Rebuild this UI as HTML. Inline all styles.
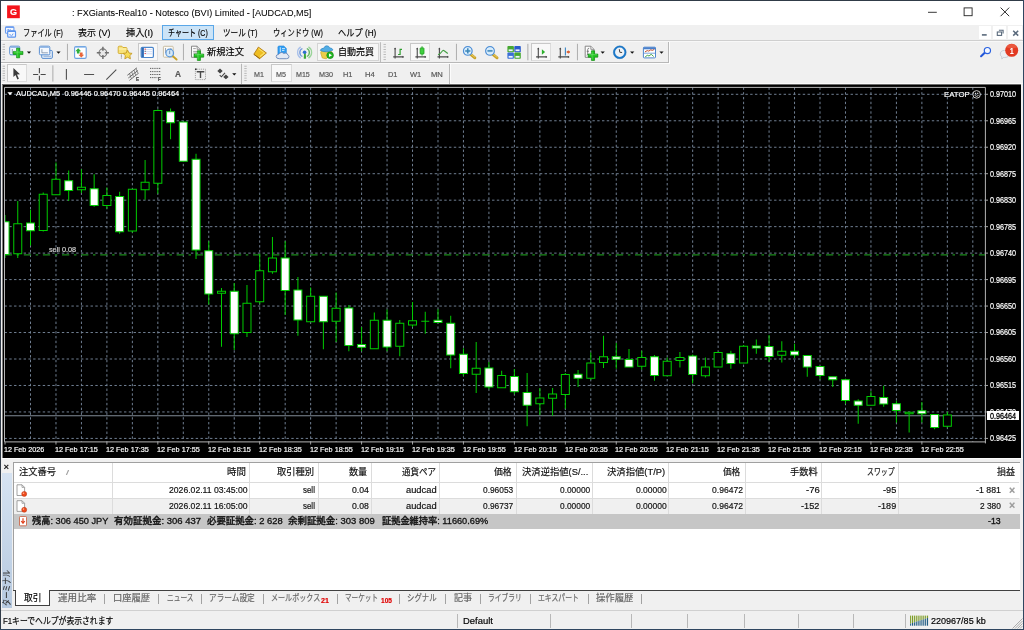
<!DOCTYPE html>
<html lang="ja"><head><meta charset="utf-8"><title>FXGiants-Real10 - Notesco (BVI) Limited - [AUDCAD,M5]</title>
<style>
html,body{margin:0;padding:0;}
body{width:1024px;height:630px;position:relative;overflow:hidden;background:#f0f0f0;font-family:"Liberation Sans","Noto Sans CJK JP",sans-serif;}
.abs{position:absolute;}
.t{position:absolute;white-space:pre;line-height:1;transform-origin:0 50%;-webkit-text-stroke:0.18px;}
.sb{-webkit-text-stroke:0.42px;}
.b{position:absolute;box-sizing:border-box;}
</style></head><body>
<div class="b" style="left:0px;top:0px;width:1024px;height:24.6px;background:#fff;"></div>
<div class="b" style="left:162.2px;top:24.7px;width:51.8px;height:15.2px;background:#cce4f7;border:1px solid #5aa7e8;"></div>
<div class="b" style="left:0px;top:40.0px;width:1024px;height:0.9px;background:#cfcfcf;"></div>
<div class="b" style="left:0px;top:40.9px;width:1024px;height:0.8px;background:#f8f8f8;"></div>
<div class="b" style="left:0px;top:62.2px;width:668.7px;height:0.9px;background:#b8b8b8;"></div>
<div class="b" style="left:668.2px;top:42px;width:0.9px;height:21px;background:#b8b8b8;"></div>
<div class="b" style="left:0px;top:63.1px;width:669.6px;height:0.9px;background:#fcfcfc;"></div>
<div class="b" style="left:669.1px;top:42px;width:0.9px;height:22px;background:#fcfcfc;"></div>
<div class="b" style="left:450.1px;top:64px;width:0.9px;height:20px;background:#fcfcfc;"></div>
<div class="b" style="left:0px;top:83.0px;width:1024px;height:0.8px;background:#fafafa;"></div>
<div class="b" style="left:449.2px;top:64px;width:0.9px;height:20px;background:#b8b8b8;"></div>
<div class="b" style="left:137.5px;top:43.3px;width:20.1px;height:17.6px;background:#f8f8f8;border:1px solid #dcdcdc;border-top-color:#c8c8c8;border-left-color:#c8c8c8;"></div>
<div class="b" style="left:410.1px;top:43.3px;width:20.1px;height:17.6px;background:#f8f8f8;border:1px solid #dcdcdc;border-top-color:#c8c8c8;border-left-color:#c8c8c8;"></div>
<div class="b" style="left:531.4px;top:43.3px;width:20px;height:17.6px;background:#f8f8f8;border:1px solid #dcdcdc;border-top-color:#c8c8c8;border-left-color:#c8c8c8;"></div>
<div class="b" style="left:317px;top:43.3px;width:62.4px;height:17.6px;background:#f6f6f6;border:1px solid #d4d4d4;"></div>
<div class="b" style="left:7.3px;top:64.3px;width:19.7px;height:17.6px;background:#f8f8f8;border:1px solid #dcdcdc;border-top-color:#c8c8c8;border-left-color:#c8c8c8;"></div>
<div class="b" style="left:271.3px;top:64.4px;width:20.3px;height:17.6px;background:#f8f8f8;border:1px solid #dcdcdc;border-top-color:#c8c8c8;border-left-color:#c8c8c8;"></div>
<div class="b" style="left:978.6px;top:25.8px;width:12.9px;height:13.5px;background:#fff;"></div>
<div class="b" style="left:993.4px;top:25.8px;width:12.9px;height:13.5px;background:#fff;"></div>
<div class="b" style="left:1008.3px;top:25.8px;width:13.3px;height:13.5px;background:#fff;"></div>
<div class="b" style="left:1.9px;top:83.6px;width:1019.6px;height:1.5px;background:#6a6a6a;"></div>
<div class="b" style="left:1.9px;top:84.8px;width:0.8px;height:373px;background:#808080;"></div>
<div class="b" style="left:2.5px;top:84.9px;width:1018.8px;height:372.8px;background:#000;"></div>
<div class="b" style="left:0px;top:457.7px;width:1024px;height:1.2px;background:#fafafa;"></div>
<div class="b" style="left:1.5px;top:473.2px;width:10.7px;height:135px;background:linear-gradient(#d6e3f2,#b6c9df);"></div>
<div class="b" style="left:13.2px;top:461.8px;width:1006.8px;height:129.0px;background:#fff;border-top:1px solid #a0a0a0;border-left:1px solid #a0a0a0;"></div>
<div class="b" style="left:14px;top:482px;width:1005.3px;height:0.9px;background:#dcdcdc;"></div>
<div class="b" style="left:14px;top:498.3px;width:1006px;height:15.6px;background:#f0f0f0;"></div>
<div class="b" style="left:14px;top:498px;width:1005.3px;height:0.9px;background:#dcdcdc;"></div>
<div class="b" style="left:14px;top:513.9px;width:1006px;height:15.4px;background:#c6c6c6;"></div>
<div class="b" style="left:111.8px;top:463.4px;width:0.9px;height:50.3px;background:#dcdcdc;"></div>
<div class="b" style="left:249.29999999999998px;top:463.4px;width:0.9px;height:50.3px;background:#dcdcdc;"></div>
<div class="b" style="left:317.6px;top:463.4px;width:0.9px;height:50.3px;background:#dcdcdc;"></div>
<div class="b" style="left:371.1px;top:463.4px;width:0.9px;height:50.3px;background:#dcdcdc;"></div>
<div class="b" style="left:439.20000000000005px;top:463.4px;width:0.9px;height:50.3px;background:#dcdcdc;"></div>
<div class="b" style="left:515.6px;top:463.4px;width:0.9px;height:50.3px;background:#dcdcdc;"></div>
<div class="b" style="left:591.9px;top:463.4px;width:0.9px;height:50.3px;background:#dcdcdc;"></div>
<div class="b" style="left:668.3000000000001px;top:463.4px;width:0.9px;height:50.3px;background:#dcdcdc;"></div>
<div class="b" style="left:745.0px;top:463.4px;width:0.9px;height:50.3px;background:#dcdcdc;"></div>
<div class="b" style="left:821.4px;top:463.4px;width:0.9px;height:50.3px;background:#dcdcdc;"></div>
<div class="b" style="left:897.7px;top:463.4px;width:0.9px;height:50.3px;background:#dcdcdc;"></div>
<div class="b" style="left:13.2px;top:590.2px;width:1006.8px;height:1.0px;background:#404040;"></div>
<div class="b" style="left:15px;top:590.2px;width:34.8px;height:15.8px;background:#fff;border:1px solid #404040;border-top:none;"></div>
<div class="b" style="left:0px;top:610.4px;width:1024px;height:0.9px;background:#d0d0d0;"></div>
<div class="b" style="left:456.8px;top:613.5px;width:0.9px;height:14.5px;background:#b8b8b8;"></div>
<div class="b" style="left:549.8000000000001px;top:613.5px;width:0.9px;height:14.5px;background:#b8b8b8;"></div>
<div class="b" style="left:631.1px;top:613.5px;width:0.9px;height:14.5px;background:#b8b8b8;"></div>
<div class="b" style="left:686.9px;top:613.5px;width:0.9px;height:14.5px;background:#b8b8b8;"></div>
<div class="b" style="left:744.0px;top:613.5px;width:0.9px;height:14.5px;background:#b8b8b8;"></div>
<div class="b" style="left:798.1px;top:613.5px;width:0.9px;height:14.5px;background:#b8b8b8;"></div>
<div class="b" style="left:852.9px;top:613.5px;width:0.9px;height:14.5px;background:#b8b8b8;"></div>
<div class="b" style="left:905.4px;top:613.5px;width:0.9px;height:14.5px;background:#b8b8b8;"></div>
<div class="b" style="left:0px;top:0px;width:1024px;height:0.9px;background:#303b48;"></div>
<div class="b" style="left:0px;top:0px;width:1.1px;height:630px;background:#303b48;"></div>
<div class="b" style="left:1022.9px;top:0px;width:1.1px;height:630px;background:#2f4660;"></div>
<div class="b" style="left:0px;top:629.0px;width:1024px;height:1.0px;background:#2f4660;"></div>
<svg class="abs" style="left:0;top:0" width="1024" height="630" viewBox="0 0 1024 630">
<path d="M4.5 94.30H985.4 M4.5 120.77H985.4 M4.5 147.24H985.4 M4.5 173.71H985.4 M4.5 200.18H985.4 M4.5 226.65H985.4 M4.5 253.12H985.4 M4.5 279.59H985.4 M4.5 306.06H985.4 M4.5 332.53H985.4 M4.5 359.00H985.4 M4.5 385.47H985.4 M4.5 411.94H985.4 M4.5 438.41H985.4" stroke="#76869a" stroke-width="0.95" stroke-dasharray="2.4 2.38" fill="none"/>
<path d="M30.50 87.4V441.9 M55.97 87.4V441.9 M81.43 87.4V441.9 M106.90 87.4V441.9 M132.37 87.4V441.9 M157.84 87.4V441.9 M183.31 87.4V441.9 M208.77 87.4V441.9 M234.24 87.4V441.9 M259.71 87.4V441.9 M285.18 87.4V441.9 M310.65 87.4V441.9 M336.11 87.4V441.9 M361.58 87.4V441.9 M387.05 87.4V441.9 M412.52 87.4V441.9 M437.99 87.4V441.9 M463.45 87.4V441.9 M488.92 87.4V441.9 M514.39 87.4V441.9 M539.86 87.4V441.9 M565.33 87.4V441.9 M590.79 87.4V441.9 M616.26 87.4V441.9 M641.73 87.4V441.9 M667.20 87.4V441.9 M692.67 87.4V441.9 M718.13 87.4V441.9 M743.60 87.4V441.9 M769.07 87.4V441.9 M794.54 87.4V441.9 M820.01 87.4V441.9 M845.47 87.4V441.9 M870.94 87.4V441.9 M896.41 87.4V441.9 M921.88 87.4V441.9 M947.35 87.4V441.9 M972.81 87.4V441.9" stroke="#76869a" stroke-width="0.95" stroke-dasharray="2.4 2.38" fill="none"/>
<path d="M4.7 254.9H985.4" stroke="#1c8c1c" stroke-width="1.1" stroke-dasharray="7.3 4.6 2.5 4.7" fill="none"/>
<path d="M4.5 415.75H985.4" stroke="#98a4b2" stroke-width="0.85" fill="none"/>
<defs><clipPath id="cc"><rect x="5" y="88" width="980" height="353.5"/></clipPath></defs>
<g clip-path="url(#cc)" stroke="#00cc00" stroke-width="1">
<path d="M5.03 215V258 M17.76 201V258 M30.50 209.75V245.5 M43.23 192.5V231.5 M55.97 162.5V194.75 M68.70 170.5V201 M81.43 169.25V193 M94.17 174.25V206.75 M106.90 187.5V208.75 M119.64 191.75V233.75 M132.37 189.25V232.5 M145.10 160V199.75 M157.84 109.25V193.75 M170.57 108.5V139.25 M183.31 122V161.25 M196.04 153.75V259 M208.77 241.25V304.5 M221.51 288V346.75 M234.24 283V350 M246.98 285V337 M259.71 253.75V303.75 M272.44 237V273.75 M285.18 241.25V315 M297.91 277V335.75 M310.65 287.5V321.75 M323.38 296.25V349.25 M336.11 292.5V342 M348.85 305V351.25 M361.58 327V351.25 M374.32 312.5V348.75 M387.05 309.5V351.25 M399.78 320V356.25 M412.52 302V327 M425.25 311.75V333.75 M437.99 309.25V322.5 M450.72 315.75V368.25 M463.45 348.25V375.75 M476.19 342V393 M488.92 362V389.25 M501.66 370.75V387.75 M514.39 369V394.25 M527.12 373V426.25 M539.86 388V415 M552.59 388V415.75 M565.33 373V408.75 M578.06 370V387 M590.79 352.5V380 M603.53 335.75V368 M616.26 343V368.75 M629.00 349V367 M641.73 350.75V369.5 M654.46 355V380.75 M667.20 357.5V375.75 M679.93 352V367.5 M692.67 354.5V383.25 M705.40 357.5V377.5 M718.13 352.5V367 M730.87 350.75V368.75 M743.60 345V363 M756.34 339.5V353.75 M769.07 335V362 M781.80 341.25V362.5 M794.54 343.75V358 M807.27 355.5V376.75 M820.01 366.5V379.5 M832.74 376.75V387 M845.47 378.75V403.75 M858.21 399.25V423.75 M870.94 391.25V405.25 M883.68 385.75V406.75 M896.41 400.75V422.5 M909.14 412.25V432.5 M921.88 402V422.5 M934.61 414.5V429.25 M947.35 411.75V427.5" fill="none"/>
<rect x="1.03" y="221.75" width="8.0" height="32.75" fill="#fff"/>
<rect x="13.76" y="223.75" width="8.0" height="30.00" fill="#000"/>
<rect x="26.50" y="223" width="8.0" height="7.75" fill="#fff"/>
<rect x="39.23" y="194.25" width="8.0" height="36.25" fill="#000"/>
<rect x="51.97" y="179.25" width="8.0" height="15.50" fill="#000"/>
<rect x="64.70" y="180.75" width="8.0" height="9.75" fill="#fff"/>
<rect x="77.43" y="187.25" width="8.0" height="2.50" fill="#000"/>
<rect x="90.17" y="188.75" width="8.0" height="16.75" fill="#fff"/>
<rect x="102.90" y="195.5" width="8.0" height="10.00" fill="#000"/>
<rect x="115.64" y="196.5" width="8.0" height="35.25" fill="#fff"/>
<rect x="128.37" y="189.25" width="8.0" height="41.75" fill="#000"/>
<rect x="141.10" y="182.25" width="8.0" height="7.50" fill="#000"/>
<rect x="153.84" y="110.5" width="8.0" height="72.75" fill="#000"/>
<rect x="166.57" y="111.75" width="8.0" height="11.00" fill="#fff"/>
<rect x="179.31" y="122" width="8.0" height="39.25" fill="#fff"/>
<rect x="192.04" y="159.25" width="8.0" height="90.75" fill="#fff"/>
<rect x="204.77" y="250.75" width="8.0" height="43.25" fill="#fff"/>
<rect x="217.51" y="291.25" width="8.0" height="2.00" fill="#000"/>
<rect x="230.24" y="291.25" width="8.0" height="42.50" fill="#fff"/>
<rect x="242.98" y="303.25" width="8.0" height="29.25" fill="#000"/>
<rect x="255.71" y="270.75" width="8.0" height="31.00" fill="#000"/>
<rect x="268.44" y="258" width="8.0" height="13.75" fill="#000"/>
<rect x="281.18" y="258" width="8.0" height="32.50" fill="#fff"/>
<rect x="293.91" y="290" width="8.0" height="30.00" fill="#fff"/>
<rect x="306.65" y="296.25" width="8.0" height="25.50" fill="#000"/>
<rect x="319.38" y="296.25" width="8.0" height="25.50" fill="#fff"/>
<rect x="332.11" y="308.25" width="8.0" height="13.00" fill="#000"/>
<rect x="344.85" y="308" width="8.0" height="37.50" fill="#fff"/>
<rect x="357.58" y="344.5" width="8.0" height="2.75" fill="#fff"/>
<rect x="370.32" y="320.25" width="8.0" height="28.50" fill="#000"/>
<rect x="383.05" y="320.25" width="8.0" height="26.75" fill="#fff"/>
<rect x="395.78" y="323.25" width="8.0" height="23.00" fill="#000"/>
<rect x="408.52" y="320.75" width="8.0" height="4.25" fill="#000"/>
<path d="M421.25 321.25H429.25"/>
<rect x="433.99" y="320.25" width="8.0" height="2.25" fill="#fff"/>
<rect x="446.72" y="323.25" width="8.0" height="31.75" fill="#fff"/>
<rect x="459.45" y="354.25" width="8.0" height="19.25" fill="#fff"/>
<rect x="472.19" y="368.25" width="8.0" height="6.00" fill="#000"/>
<rect x="484.92" y="368" width="8.0" height="19.00" fill="#fff"/>
<rect x="497.66" y="375.5" width="8.0" height="12.25" fill="#000"/>
<rect x="510.39" y="376.5" width="8.0" height="15.25" fill="#fff"/>
<rect x="523.12" y="392.5" width="8.0" height="12.75" fill="#fff"/>
<rect x="535.86" y="398" width="8.0" height="5.75" fill="#000"/>
<rect x="548.59" y="394" width="8.0" height="4.25" fill="#000"/>
<rect x="561.33" y="374.5" width="8.0" height="20.00" fill="#000"/>
<rect x="574.06" y="374.25" width="8.0" height="4.00" fill="#fff"/>
<rect x="586.79" y="363" width="8.0" height="15.25" fill="#000"/>
<rect x="599.53" y="356.75" width="8.0" height="5.75" fill="#000"/>
<rect x="612.26" y="356.75" width="8.0" height="2.50" fill="#fff"/>
<rect x="625.00" y="359.5" width="8.0" height="7.50" fill="#fff"/>
<rect x="637.73" y="357.5" width="8.0" height="8.75" fill="#000"/>
<rect x="650.46" y="356.75" width="8.0" height="18.75" fill="#fff"/>
<rect x="663.20" y="361.25" width="8.0" height="14.50" fill="#000"/>
<rect x="675.93" y="357.5" width="8.0" height="3.00" fill="#000"/>
<rect x="688.67" y="356" width="8.0" height="18.50" fill="#fff"/>
<rect x="701.40" y="367" width="8.0" height="8.75" fill="#000"/>
<rect x="714.13" y="352.5" width="8.0" height="14.50" fill="#000"/>
<rect x="726.87" y="353.75" width="8.0" height="9.75" fill="#fff"/>
<rect x="739.60" y="346.25" width="8.0" height="16.75" fill="#000"/>
<rect x="752.34" y="346" width="8.0" height="2.00" fill="#fff"/>
<rect x="765.07" y="346.5" width="8.0" height="10.00" fill="#fff"/>
<rect x="777.80" y="351.25" width="8.0" height="4.00" fill="#000"/>
<rect x="790.54" y="351.25" width="8.0" height="3.75" fill="#fff"/>
<rect x="803.27" y="355.5" width="8.0" height="11.50" fill="#fff"/>
<rect x="816.01" y="366.5" width="8.0" height="9.00" fill="#fff"/>
<rect x="828.74" y="376.75" width="8.0" height="3.00" fill="#fff"/>
<rect x="841.47" y="379.75" width="8.0" height="20.75" fill="#fff"/>
<rect x="854.21" y="401" width="8.0" height="4.25" fill="#fff"/>
<rect x="866.94" y="396.5" width="8.0" height="8.75" fill="#000"/>
<rect x="879.68" y="397.5" width="8.0" height="6.50" fill="#fff"/>
<rect x="892.41" y="403.75" width="8.0" height="6.75" fill="#fff"/>
<rect x="905.14" y="412.25" width="8.0" height="1.50" fill="#000"/>
<rect x="917.88" y="410.75" width="8.0" height="3.00" fill="#fff"/>
<rect x="930.61" y="414.5" width="8.0" height="13.00" fill="#fff"/>
<rect x="943.35" y="415" width="8.0" height="11.25" fill="#000"/>
</g>
<path d="M4.5 441.9V87.4H985.4V443.4" stroke="#b4b4b4" stroke-width="1" fill="none"/>
<path d="M4.5 441.9H985.4" stroke="#b4b4b4" stroke-width="1" fill="none"/>
<path d="M985.4 94.30h2.6 M985.4 120.77h2.6 M985.4 147.24h2.6 M985.4 173.71h2.6 M985.4 200.18h2.6 M985.4 226.65h2.6 M985.4 253.12h2.6 M985.4 279.59h2.6 M985.4 306.06h2.6 M985.4 332.53h2.6 M985.4 359.00h2.6 M985.4 385.47h2.6 M985.4 411.94h2.6 M985.4 438.41h2.6" stroke="#b4b4b4" stroke-width="0.9" fill="none"/>
<path d="M5.03 441.9v2.6 M55.97 441.9v2.6 M106.90 441.9v2.6 M157.84 441.9v2.6 M208.77 441.9v2.6 M259.71 441.9v2.6 M310.65 441.9v2.6 M361.58 441.9v2.6 M412.52 441.9v2.6 M463.45 441.9v2.6 M514.39 441.9v2.6 M565.33 441.9v2.6 M616.26 441.9v2.6 M667.20 441.9v2.6 M718.13 441.9v2.6 M769.07 441.9v2.6 M820.01 441.9v2.6 M870.94 441.9v2.6 M921.88 441.9v2.6" stroke="#b4b4b4" stroke-width="0.9" fill="none"/>
<path d="M7.4 92.3h5.2l-2.6 2.9z" fill="#fff"/>
<g fill="none" stroke="#e0e0e0" stroke-width="0.9"><circle cx="976.6" cy="94.4" r="3.8"/><path d="M974.6 95.3q2 2.2 4 0"/></g><path d="M974.9 92.8h1.2v1.2h-1.2zM977.1 92.8h1.2v1.2h-1.2z" fill="#e0e0e0"/>
</svg>
<svg class="abs" style="left:0px;top:0px" width="1024" height="630" viewBox="0 0 1024 630"><rect x="7.1" y="5.4" width="12.7" height="12.8" fill="#f5141b"/><rect x="5.500" y="26.800" width="8.400" height="6.400" rx="1" fill="#f6f9ff" stroke="#6a9cf0" stroke-width="1.100"/><path d="M5.500 27.300h8.400" stroke="#6a9cf0" stroke-width="1.300"/><path d="M7 30.700l1.200-1.600 1.200 1.200 1.200-1.200" stroke="#5b8fe8" stroke-width="0.800" fill="none"/><rect x="7.700" y="30.800" width="7.800" height="6.400" rx="1" fill="#f6f9ff" stroke="#5b93ee" stroke-width="1.200"/><path d="M7.700 31.300h7.800" stroke="#5b93ee" stroke-width="1.400"/><path d="M9.300 35.300q.6-2 1.400 0t1.400 0 1.400-1.400" stroke="#6a9cf0" stroke-width="0.900" fill="none"/><path d="M928 12.3h8.8" stroke="#222" stroke-width="0.9"/><rect x="964.1" y="7.9" width="8" height="7.8" fill="none" stroke="#222" stroke-width="0.9"/><path d="M1000.6 7.6l8.6 8.6M1009.2 7.6l-8.6 8.6" stroke="#222" stroke-width="0.95"/><rect x="981.9" y="34.1" width="4.8" height="1.6" fill="#5a6a7c"/><path d="M998.9 30.2h4.2v3.4" fill="none" stroke="#5a6a7c" stroke-width="1.1"/><rect x="997.3" y="32" width="4.3" height="3.4" fill="#fff" stroke="#5a6a7c" stroke-width="1.1"/><path d="M1013.2 30.8l5 4.8M1018.2 30.8l-5 4.8" stroke="#5a6a7c" stroke-width="1.5"/><rect x="2.6" y="43.95" width="2.4" height="0.9" fill="#b4b4b4"/><rect x="2.6" y="46.48" width="2.4" height="0.9" fill="#b4b4b4"/><rect x="2.6" y="49.02" width="2.4" height="0.9" fill="#b4b4b4"/><rect x="2.6" y="51.55" width="2.4" height="0.9" fill="#b4b4b4"/><rect x="2.6" y="54.08" width="2.4" height="0.9" fill="#b4b4b4"/><rect x="2.6" y="56.62" width="2.4" height="0.9" fill="#b4b4b4"/><rect x="2.6" y="59.15" width="2.4" height="0.9" fill="#b4b4b4"/><rect x="9.7" y="46.2" width="10" height="8.6" rx="1.2" fill="#f2f7fd" stroke="#5b8fd0" stroke-width="1"/><path d="M10.2 47.3h9" stroke="#8db4e6" stroke-width="1.2"/><path d="M12.3 49v4.2h2" stroke="#6a7f9a" stroke-width="0.7" fill="none"/><path d="M16.55 48.2h3.1v3.25h3.25v3.1h-3.25v3.25h-3.1v-3.25h-3.25v-3.1h3.25z" fill="#22c422" stroke="#0e8a0e" stroke-width="0.7" stroke-linejoin="round"/><path d="M17.150000000000002 49.1v7.8M14.200000000000001 52.050000000000004h7.8" stroke="#7dea7d" stroke-width="0.7" fill="none" opacity="0.8"/><path d="M26.9 51.5h4.2l-2.1 2.3z" fill="#111"/><rect x="41.7" y="50.4" width="10.7" height="8" rx="1.2" fill="#dfeaf8" stroke="#5b8fd0" stroke-width="1"/><path d="M43.5 56.3h7.5" stroke="#8aa6cc" stroke-width="0.8"/><rect x="39.4" y="46.2" width="10.4" height="8.6" rx="1.2" fill="#f4f8fe" stroke="#5b8fd0" stroke-width="1"/><path d="M39.9 47.3h9.4" stroke="#8db4e6" stroke-width="1.2"/><path d="M41.9 49.2v3.6h6" stroke="#6a7f9a" stroke-width="0.7" fill="none"/><path d="M56.4 51.5h4.2l-2.1 2.3z" fill="#111"/><rect x="66.95" y="43.8" width="0.9" height="16.50" fill="#a6a6a6"/><rect x="74.6" y="46.6" width="11.6" height="11.8" rx="1.3" fill="#fff" stroke="#6aa0e0" stroke-width="1.1"/><path d="M75 47.3h10.8" stroke="#9cc2ee" stroke-width="1"/><path d="M78.2 48.3l2.9 2.9h-1.6v2.2h-2.6v-2.2h-1.6z" fill="#2fae3a"/><path d="M81.3 57.6l-2.9-2.9h1.6v-2.2h2.6v2.2h1.6z" fill="#e8663a"/><circle cx="102.9" cy="52.8" r="3.9" fill="#e8e8e8" stroke="#777" stroke-width="1.1"/><path d="M102.9 46.7v4M102.9 54.9v4M96.8 52.8h4M104.9 52.8h4" stroke="#707070" stroke-width="1.5"/><path d="M118.2 47.2q0-1 1-1h2.6l1.2 1.3h3q1 0 1 1v4.2q0 .8-1 .8h-6.8q-1 0-1-.8z" fill="#f7e27a" stroke="#d1a92c" stroke-width="0.9"/><path d="M118.8 49h7.8" stroke="#fff6c0" stroke-width="0.9"/><path d="M121.4 54.6v4" stroke="#555" stroke-width="0.8" stroke-dasharray="1 0.8"/><path d="M127.6 50.1l1.4 2.9 3.1.4-2.3 2.2.6 3.2-2.8-1.6-2.8 1.6.6-3.2-2.3-2.2 3.1-.4z" fill="#f6dc55" stroke="#c59a22" stroke-width="0.9" stroke-linejoin="round"/><rect x="141.2" y="47.3" width="12.2" height="10.2" rx="1.3" fill="#fff" stroke="#4b86cc" stroke-width="1.2"/><rect x="141.6" y="47.8" width="2.3" height="9.2" fill="#2f6bb5"/><path d="M144.6 49.6h8M144.6 51.7h8M144.6 53.8h8" stroke="#cfdcf6" stroke-width="1"/><path d="M144.6 48.6h1.2v1.2h-1.2zM144.6 52.9h1.2v1.2h-1.2z" fill="#e8414a"/><path d="M144.6 50.8h1.2v1h-1.2z" fill="#555"/><rect x="163.4" y="46.3" width="9.8" height="10.9" rx="0.8" fill="#fbfaf6" stroke="#c4b89c" stroke-width="0.9"/><path d="M165.5 48v5M170.9 48v3" stroke="#8a93a3" stroke-width="0.8"/><path d="M172.6 56l4 3.5" stroke="#c9a227" stroke-width="1.9" stroke-linecap="round"/><circle cx="169.7" cy="53" r="3.8" fill="#cfe6f8" fill-opacity="0.9" stroke="#5a98dc" stroke-width="1.2"/><path d="M169.6 50.6v3.4" stroke="#7f9fc4" stroke-width="1.2"/><rect x="182.95" y="43.8" width="0.9" height="16.50" fill="#a6a6a6"/><path d="M191.5 46.2H197.10000000000002L200.3 49.400000000000006V57.3H191.5z" fill="#fdfdfd" stroke="#7a7a7a" stroke-width="0.9" stroke-linejoin="round"/><path d="M197.10000000000002 46.2V49.400000000000006H200.3" fill="#e4e4e4" stroke="#7a7a7a" stroke-width="0.7" stroke-linejoin="round"/><path d="M193.2 48.6h2.6M193.2 51.4h4.6M193.2 53.1h4.6" stroke="#8a8a8a" stroke-width="0.8"/><path d="M197.35 50.800000000000004h3.1v3.25h3.25v3.1h-3.25v3.25h-3.1v-3.25h-3.25v-3.1h3.25z" fill="#22c422" stroke="#0e8a0e" stroke-width="0.7" stroke-linejoin="round"/><path d="M197.95 51.7v7.8M195.0 54.650000000000006h7.8" stroke="#7dea7d" stroke-width="0.7" fill="none" opacity="0.8"/><path d="M258.4 47.1l8 5.9-6.8 5.7-5.8-4.4z" fill="#eebd22" stroke="#b27d18" stroke-width="0.9" stroke-linejoin="round"/><path d="M258.6 48.6l5.8 4.3-4.4 3.6" fill="none" stroke="#fbe26a" stroke-width="1.1"/><path d="M254.2 54.5l5.6 4.1" stroke="#9a6a12" stroke-width="1"/><path d="M277.900 47.200q0-1.300 1.300-1.300h4.600l2.600 2.500v5.800h-8.500z" fill="#2f9cf0" stroke="#1f7fd8" stroke-width="0.500"/><path d="M280.300 47.300v5M282 48.600h3M282 50.400h2.400" stroke="#d9efff" stroke-width="0.900"/><path d="M279.200 58.700q-3 0-3-2.200 0-2 2.500-2.200 .7-1.800 2.900-1.800 1.400 0 2.300 1 .9-.6 2.100-.4 1.600 .3 1.700 1.800 1.300 .3 1.300 1.800 0 2-2.600 2z" fill="#e3e9f4" stroke="#6886b8" stroke-width="0.900"/><g fill="none" stroke-width="1.300"><path d="M300.700 46.900a6.600 6.600 0 0 0 0 11.200" stroke="#a9c1ea"/><path d="M302.400 48.500a4.400 4.400 0 0 0 0 8" stroke="#6f98dc"/><path d="M308.500 46.900a6.600 6.600 0 0 1 0 11.200" stroke="#9ad49a"/><path d="M306.800 48.500a4.400 4.400 0 0 1 0 8" stroke="#5db55d"/></g><path d="M304.100 52.500l1.600 0 .4 5.900q-1.400 .6-2.400 0z" fill="#3aa83a"/><circle cx="304.600" cy="52.300" r="1.800" fill="#2f6fd0"/><path d="M321.200 51.200l9.500-.4 1.400 1.400-5.800 6.600-4-.8-1.600-5.200z" fill="#edcd4a" stroke="#c9a526" stroke-width="0.7" stroke-linejoin="round"/><path d="M320.300 50.400q.4-2 3.800-2.400 .4-2.200 2.700-2.200 2.200 0 2.800 2 3 .3 3.400 2.200-2.800 1.800-6.400 1.800-3.800 0-6.300-1.400z" fill="#52ade4" stroke="#2f86c6" stroke-width="0.7"/><circle cx="330.100" cy="55.300" r="3.300" fill="#23b523" stroke="#118a11" stroke-width="0.7"/><path d="M329 53.500l3 1.800-3 1.800z" fill="#fff"/><rect x="379.95" y="42.2" width="0.9" height="20.00" fill="#b4b4b4"/><rect x="383.5" y="43.95" width="2.4" height="0.9" fill="#b4b4b4"/><rect x="383.5" y="46.48" width="2.4" height="0.9" fill="#b4b4b4"/><rect x="383.5" y="49.02" width="2.4" height="0.9" fill="#b4b4b4"/><rect x="383.5" y="51.55" width="2.4" height="0.9" fill="#b4b4b4"/><rect x="383.5" y="54.08" width="2.4" height="0.9" fill="#b4b4b4"/><rect x="383.5" y="56.62" width="2.4" height="0.9" fill="#b4b4b4"/><rect x="383.5" y="59.15" width="2.4" height="0.9" fill="#b4b4b4"/><path d="M395.1 48.0V58.6M393.2 56.9H403.6" stroke="#4a4a4a" stroke-width="1.1" fill="none"/><path d="M394.0 49.2L395.1 47.6L396.20000000000005 49.2zM402.40000000000003 55.8L404.0 56.9L402.40000000000003 58.0z" fill="#4a4a4a"/><path d="M400.100 48.700v6.300M400.100 49.400h1.900M400.100 54.500h-2" stroke="#2e9e2e" stroke-width="1.2" fill="none"/><path d="M417.25 48.0V58.6M415.4 56.9H425.9" stroke="#4a4a4a" stroke-width="1.1" fill="none"/><path d="M416.15 49.2L417.25 47.6L418.35 49.2zM424.7 55.8L426.29999999999995 56.9L424.7 58.0z" fill="#4a4a4a"/><path d="M422.050 46.250v9.400" stroke="#2fae2f" stroke-width="1"/><rect x="420.100" y="47.900" width="3.900" height="6.100" rx="0.600" fill="#3fcf3f" stroke="#1f9e1f" stroke-width="0.800"/><path d="M439.4 48.0V58.6M437.5 56.9H448.3" stroke="#4a4a4a" stroke-width="1.1" fill="none"/><path d="M438.29999999999995 49.2L439.4 47.6L440.5 49.2zM447.1 55.8L448.7 56.9L447.1 58.0z" fill="#4a4a4a"/><path d="M438.100 54.800q2.600-1.300 4.300-3.800 .9-1 1.800-.2l3.600 2.700" stroke="#44a044" stroke-width="1.100" fill="none"/><rect x="455.95" y="43.8" width="0.9" height="16.50" fill="#a6a6a6"/><path d="M470.64 54.34L474.90 57.80" stroke="#c9a227" stroke-width="2.8" stroke-linecap="round"/><path d="M470.94 54.14L474.80 57.20" stroke="#f0d874" stroke-width="0.8" stroke-linecap="round"/><circle cx="467.8" cy="50.9" r="4.3" fill="#cfe8fa" stroke="#4f8fd6" stroke-width="1.3"/><circle cx="467.8" cy="50.9" r="3.1999999999999997" fill="none" stroke="#eaf6ff" stroke-width="0.6"/><path d="M465.2 50.9h5.2M467.8 48.3v5.2" stroke="#3d86b8" stroke-width="1.5"/><path d="M492.84 54.34L497.10 57.80" stroke="#c9a227" stroke-width="2.8" stroke-linecap="round"/><path d="M493.14 54.14L497.00 57.20" stroke="#f0d874" stroke-width="0.8" stroke-linecap="round"/><circle cx="490.0" cy="50.9" r="4.3" fill="#cfe8fa" stroke="#4f8fd6" stroke-width="1.3"/><circle cx="490.0" cy="50.9" r="3.1999999999999997" fill="none" stroke="#eaf6ff" stroke-width="0.6"/><path d="M487.4 50.9h5.2" stroke="#3d86b8" stroke-width="1.5"/><rect x="507.400" y="46.100" width="6.500" height="6.100" rx="0.800" fill="#46a832"/><rect x="514.300" y="46.100" width="6.500" height="6.100" rx="0.800" fill="#2a5ccc"/><rect x="507.400" y="52.600" width="6.500" height="6.100" rx="0.800" fill="#3a6ed6"/><rect x="514.300" y="52.600" width="6.500" height="6.100" rx="0.800" fill="#46a832"/><g fill="#eef4ff"><rect x="508.600" y="49.400" width="4.100" height="1.800"/><rect x="515.500" y="49.400" width="4.100" height="1.800"/><rect x="508.600" y="55.900" width="4.100" height="1.800"/><rect x="515.500" y="55.900" width="4.100" height="1.800"/></g><rect x="527.05" y="43.8" width="1.5" height="16.50" fill="#c2c2c2"/><path d="M538.3 48.0V58.6M536.1 56.9H546.9" stroke="#4a4a4a" stroke-width="1.1" fill="none"/><path d="M537.1999999999999 49.2L538.3 47.6L539.4 49.2zM545.6999999999999 55.8L547.3 56.9L545.6999999999999 58.0z" fill="#4a4a4a"/><path d="M541.900 49.300v5.500l3.200-2.750z" fill="#2cb02c"/><path d="M560.3 48.0V58.6M558.3 56.9H569.1" stroke="#4a4a4a" stroke-width="1.1" fill="none"/><path d="M559.1999999999999 49.2L560.3 47.6L561.4 49.2zM567.9 55.8L569.5 56.9L567.9 58.0z" fill="#4a4a4a"/><path d="M565.400 47.500v8.100" stroke="#3a86c4" stroke-width="1.100"/><path d="M566.200 52l2.500-1.800v1.100h1.300v1.400h-1.300v1.100z" fill="#d8582a"/><rect x="576.95" y="43.8" width="0.9" height="16.50" fill="#a6a6a6"/><path d="M585.2 46.2H590.8L594 49.400000000000006V57.3H585.2z" fill="#fdfdfd" stroke="#7a7a7a" stroke-width="0.9" stroke-linejoin="round"/><path d="M590.8 46.2V49.400000000000006H594" fill="#e4e4e4" stroke="#7a7a7a" stroke-width="0.7" stroke-linejoin="round"/><path d="M589.200 48.200q-1.500 0-1.500 1.400v4.400q0 1.200-1.100 1.200M586.700 51.300h2.200" stroke="#666" stroke-width="0.800" fill="none"/><path d="M591.45 50.800000000000004h3.1v3.25h3.25v3.1h-3.25v3.25h-3.1v-3.25h-3.25v-3.1h3.25z" fill="#22c422" stroke="#0e8a0e" stroke-width="0.7" stroke-linejoin="round"/><path d="M592.0500000000001 51.7v7.8M589.1 54.650000000000006h7.8" stroke="#7dea7d" stroke-width="0.7" fill="none" opacity="0.8"/><path d="M600.6 51.5h4.2l-2.1 2.3z" fill="#111"/><circle cx="619.750" cy="52.300" r="5.600" fill="#eef2f6" stroke="#1c7acc" stroke-width="1.800"/><circle cx="619.750" cy="52.300" r="6.400" fill="none" stroke="#0f5fa8" stroke-width="0.400"/><path d="M619.300 49.200l.5 3.100 2.300.2" stroke="#333" stroke-width="0.900" fill="none"/><path d="M630.1 51.5h4.2l-2.1 2.3z" fill="#111"/><rect x="643.400" y="47.200" width="12.100" height="10.700" rx="0.800" fill="#fff" stroke="#4e86cc" stroke-width="1"/><rect x="643.600" y="47.300" width="11.700" height="2" fill="#4a80cc"/><path d="M643.600 53.200h11.700" stroke="#5a8ed4" stroke-width="0.800"/><path d="M645 51.900l2.200-1.300 1.600.5 2-1.300 1.500.6 2-1" stroke="#c4532e" stroke-width="1" fill="none"/><path d="M645.200 56.800l2.200-1.500 1.600.7 2.200-1.700 2.500 2.200" stroke="#4aa84a" stroke-width="1" fill="none"/><path d="M659.4 51.5h4.2l-2.1 2.3z" fill="#111"/><path d="M985 52.600l-3.900 3.600" stroke="#2356d8" stroke-width="2.100" stroke-linecap="round"/><circle cx="987.400" cy="50.600" r="3.100" fill="#f4f8ff" stroke="#2a62e0" stroke-width="1.200"/><path d="M1000.300 54.200q0-3.800 4.400-3.800 4.400 0 4.400 3.600 0 3.500-4.400 3.500-.7 0-1.300-.1l-1.600 1.700v-2.300q-1.500-.9-1.500-2.600z" fill="#eceef2" stroke="#b9bec8" stroke-width="0.700"/><circle cx="1011.700" cy="50.300" r="6.500" fill="#e23a22"/><path d="M1006 47.300a6.500 6.500 0 0 1 11.400 0q-5.700 2.300-11.400 0z" fill="#f0644a" opacity="0.700"/><rect x="2.6" y="65.75" width="2.4" height="0.9" fill="#b4b4b4"/><rect x="2.6" y="68.13" width="2.4" height="0.9" fill="#b4b4b4"/><rect x="2.6" y="70.52" width="2.4" height="0.9" fill="#b4b4b4"/><rect x="2.6" y="72.90" width="2.4" height="0.9" fill="#b4b4b4"/><rect x="2.6" y="75.28" width="2.4" height="0.9" fill="#b4b4b4"/><rect x="2.6" y="77.67" width="2.4" height="0.9" fill="#b4b4b4"/><rect x="2.6" y="80.05" width="2.4" height="0.9" fill="#b4b4b4"/><path d="M13.400 68.100v8.900l2.100-1.900 1.900 4.300 1.500-.7-1.900-4.200 3-.2z" fill="#3c3c3c"/><path d="M33.100 74.500h5.100M40.600 74.500h5.100M39.400 68.100v5.100M39.400 75.700v4.700" stroke="#484848" stroke-width="1.100"/><rect x="52.05" y="65.3" width="1.5" height="16.30" fill="#c2c2c2"/><path d="M66.400 69.100v10.600M84.100 74.500h10M106.300 79.700l10-10" stroke="#505050" stroke-width="1.100"/><path d="M127.300 75.300l9.600-7.500M128.300 78l9.600-7.500M129.400 80.400l9.300-7.300" stroke="#505050" stroke-width="0.800"/><path d="M129.500 73.500l1.800 5M131.700 71.800l1.800 5M133.900 70l1.800 5M136 68.400l1.600 4.500" stroke="#505050" stroke-width="0.600"/><path d="M150 68.400h11M150 71.600h11M150 74.500h11M150 77.600h7.500" stroke="#505050" stroke-width="0.900" stroke-dasharray="1.100 0.700"/><rect x="195.400" y="69.200" width="10.100" height="10.400" fill="none" stroke="#8a8a8a" stroke-width="0.800" stroke-dasharray="1 0.900"/><path d="M196.700 71.700h7.600M200.500 71.700v6.200" stroke="#4a4a4a" stroke-width="1.400"/><rect x="195" y="68.500" width="1.600" height="1.500" fill="#333"/><path d="M220 68.600l2.700 2.400-2.700 2.400-2.700-2.400zM225.900 74.500l2.700 2.400-2.700 2.400-2.700-2.400z" fill="#454545"/><path d="M219.700 75.200l1.700 1.600 3.600-4" stroke="#454545" stroke-width="1.100" fill="none"/><path d="M232.20000000000002 73.30000000000001h4.2l-2.1 2.3z" fill="#111"/><rect x="241.05" y="63.8" width="0.9" height="20.20" fill="#b0b0b0"/><rect x="244.3" y="65.75" width="2.4" height="0.9" fill="#b4b4b4"/><rect x="244.3" y="68.13" width="2.4" height="0.9" fill="#b4b4b4"/><rect x="244.3" y="70.52" width="2.4" height="0.9" fill="#b4b4b4"/><rect x="244.3" y="72.90" width="2.4" height="0.9" fill="#b4b4b4"/><rect x="244.3" y="75.28" width="2.4" height="0.9" fill="#b4b4b4"/><rect x="244.3" y="77.67" width="2.4" height="0.9" fill="#b4b4b4"/><rect x="244.3" y="80.05" width="2.4" height="0.9" fill="#b4b4b4"/><rect x="910.10" y="615.6" width="1.05" height="8.00" fill="#7c9c22"/><rect x="910.10" y="623.60" width="1.05" height="2.10" fill="#1d5a82"/><rect x="911.98" y="615.6" width="1.05" height="7.38" fill="#7c9c22"/><rect x="911.98" y="622.98" width="1.05" height="2.72" fill="#1d5a82"/><rect x="913.86" y="615.6" width="1.05" height="6.76" fill="#7c9c22"/><rect x="913.86" y="622.36" width="1.05" height="3.34" fill="#1d5a82"/><rect x="915.74" y="615.6" width="1.05" height="6.14" fill="#7c9c22"/><rect x="915.74" y="621.74" width="1.05" height="3.96" fill="#1d5a82"/><rect x="917.62" y="615.6" width="1.05" height="5.52" fill="#7c9c22"/><rect x="917.62" y="621.12" width="1.05" height="4.58" fill="#1d5a82"/><rect x="919.50" y="615.6" width="1.05" height="4.90" fill="#7c9c22"/><rect x="919.50" y="620.50" width="1.05" height="5.20" fill="#1d5a82"/><rect x="921.38" y="615.6" width="1.05" height="4.28" fill="#7c9c22"/><rect x="921.38" y="619.88" width="1.05" height="5.82" fill="#1d5a82"/><rect x="923.26" y="615.6" width="1.05" height="3.66" fill="#7c9c22"/><rect x="923.26" y="619.26" width="1.05" height="6.44" fill="#1d5a82"/><rect x="925.14" y="615.6" width="1.05" height="3.04" fill="#7c9c22"/><rect x="925.14" y="618.64" width="1.05" height="7.06" fill="#1d5a82"/><rect x="927.02" y="615.6" width="1.05" height="2.42" fill="#7c9c22"/><rect x="927.02" y="618.02" width="1.05" height="7.68" fill="#1d5a82"/><path d="M1022.500 618.500l-10 10M1022.500 621l-7.500 7.500M1022.500 623.500l-5 5M1022.500 626l-2.500 2.500" stroke="#9a9a9a" stroke-width="0.800"/><path d="M4.300 464.800l4 4M8.300 464.800l-4 4" stroke="#222" stroke-width="1.100"/><path d="M17 484.8h5l2.600 2.600v8.100h-7.600z" fill="#fff" stroke="#8a8a8a" stroke-width="0.800" stroke-linejoin="round"/><path d="M22 484.8v2.600h2.600" fill="none" stroke="#8a8a8a" stroke-width="0.700"/><circle cx="24.200" cy="493.90000000000003" r="2.500" fill="#ee4a1c" stroke="#b83210" stroke-width="0.500"/><circle cx="23.500" cy="493.2" r="0.800" fill="#ffb090"/><path d="M17 500.7h5l2.600 2.600v8.100h-7.600z" fill="#fff" stroke="#8a8a8a" stroke-width="0.800" stroke-linejoin="round"/><path d="M22 500.7v2.600h2.600" fill="none" stroke="#8a8a8a" stroke-width="0.700"/><circle cx="24.200" cy="509.8" r="2.500" fill="#ee4a1c" stroke="#b83210" stroke-width="0.500"/><circle cx="23.500" cy="509.09999999999997" r="0.800" fill="#ffb090"/><rect x="19.500" y="516.500" width="7" height="9.300" rx="0.800" fill="#fff" stroke="#c85a3a" stroke-width="0.800"/><path d="M23 518.300v4.400M21.200 521l1.800 2.300 1.800-2.300" stroke="#e0401c" stroke-width="1.200" fill="none"/></svg>
<div id="tx" style="position:absolute;left:0;top:0;width:1024px;height:630px;will-change:transform">
<span class="t" id="t0" style="left:71.70px;top:7.90px;font-size:9.6px;transform:scaleX(0.9530);-webkit-text-stroke:0.05px;">: FXGiants-Real10 - Notesco (BVI) Limited - [AUDCAD,M5]</span>
<span class="t" id="t1" style="left:23.25px;top:27.90px;font-size:9.6px;transform:scaleX(0.7505);">ファイル (F)</span>
<span class="t" id="t2" style="left:78.25px;top:27.90px;font-size:9.6px;transform:scaleX(0.9378);">表示 (V)</span>
<span class="t" id="t3" style="left:126.25px;top:27.90px;font-size:9.6px;transform:scaleX(0.9558);">挿入(I)</span>
<span class="t" id="t4" style="left:168.40px;top:27.90px;font-size:9.6px;transform:scaleX(0.7334);">チャート (C)</span>
<span class="t" id="t5" style="left:222.50px;top:27.90px;font-size:9.6px;transform:scaleX(0.7894);">ツール (T)</span>
<span class="t" id="t6" style="left:272.80px;top:27.90px;font-size:9.6px;transform:scaleX(0.7550);">ウィンドウ (W)</span>
<span class="t" id="t7" style="left:337.70px;top:27.90px;font-size:9.6px;transform:scaleX(0.8556);">ヘルプ (H)</span>
<span class="t" id="t8" style="left:206.50px;top:46.70px;font-size:9.6px;transform:scaleX(0.9616);">新規注文</span>
<span class="t" id="t9" style="left:337.70px;top:46.70px;font-size:9.6px;transform:scaleX(0.9407);">自動売買</span>
<span class="t" id="t10" style="left:253.50px;top:70.78px;font-size:8px;color:#555;transform:scaleX(0.8899);">M1</span>
<span class="t" id="t11" style="left:275.70px;top:70.78px;font-size:8px;color:#555;transform:scaleX(0.8989);">M5</span>
<span class="t" id="t12" style="left:296.40px;top:70.78px;font-size:8px;color:#555;transform:scaleX(0.8867);">M15</span>
<span class="t" id="t13" style="left:318.70px;top:70.78px;font-size:8px;color:#555;transform:scaleX(0.8996);">M30</span>
<span class="t" id="t14" style="left:343.00px;top:70.78px;font-size:8px;color:#555;transform:scaleX(0.9185);">H1</span>
<span class="t" id="t15" style="left:365.00px;top:70.78px;font-size:8px;color:#555;transform:scaleX(0.9576);">H4</span>
<span class="t" id="t16" style="left:387.80px;top:70.78px;font-size:8px;color:#555;transform:scaleX(0.9185);">D1</span>
<span class="t" id="t17" style="left:409.70px;top:70.78px;font-size:8px;color:#555;transform:scaleX(0.9417);">W1</span>
<span class="t" id="t18" style="left:430.80px;top:70.78px;font-size:8px;color:#555;transform:scaleX(0.9556);">MN</span>
<span class="t" id="t19" style="left:16.25px;top:89.68px;font-size:8px;color:#fff;transform:scaleX(0.9387);">AUDCAD,M5  0.96446 0.96470 0.96445 0.96464</span>
<span class="t" id="t20" style="left:944.00px;top:90.68px;font-size:8px;color:#fff;transform:scaleX(0.9776);">EATOP</span>
<span class="t" id="t21" style="left:49.00px;top:246.48px;font-size:8px;color:#d8d8d8;transform:scaleX(0.9061);">sell 0.08</span>
<span class="t" id="t22" style="left:989.50px;top:90.23px;font-size:8.3px;color:#fff;transform:scaleX(0.8700);">0.97010</span>
<span class="t" id="t23" style="left:989.50px;top:116.70px;font-size:8.3px;color:#fff;transform:scaleX(0.8700);">0.96965</span>
<span class="t" id="t24" style="left:989.50px;top:143.17px;font-size:8.3px;color:#fff;transform:scaleX(0.8700);">0.96920</span>
<span class="t" id="t25" style="left:989.50px;top:169.64px;font-size:8.3px;color:#fff;transform:scaleX(0.8700);">0.96875</span>
<span class="t" id="t26" style="left:989.50px;top:196.11px;font-size:8.3px;color:#fff;transform:scaleX(0.8700);">0.96830</span>
<span class="t" id="t27" style="left:989.50px;top:222.58px;font-size:8.3px;color:#fff;transform:scaleX(0.8700);">0.96785</span>
<span class="t" id="t28" style="left:989.50px;top:249.05px;font-size:8.3px;color:#fff;transform:scaleX(0.8700);">0.96740</span>
<span class="t" id="t29" style="left:989.50px;top:275.52px;font-size:8.3px;color:#fff;transform:scaleX(0.8700);">0.96695</span>
<span class="t" id="t30" style="left:989.50px;top:301.99px;font-size:8.3px;color:#fff;transform:scaleX(0.8700);">0.96650</span>
<span class="t" id="t31" style="left:989.50px;top:328.46px;font-size:8.3px;color:#fff;transform:scaleX(0.8700);">0.96605</span>
<span class="t" id="t32" style="left:989.50px;top:354.93px;font-size:8.3px;color:#fff;transform:scaleX(0.8700);">0.96560</span>
<span class="t" id="t33" style="left:989.50px;top:381.40px;font-size:8.3px;color:#fff;transform:scaleX(0.8700);">0.96515</span>
<span class="t" id="t34" style="left:989.50px;top:407.87px;font-size:8.3px;color:#fff;transform:scaleX(0.8700);">0.96470</span>
<span class="t" id="t35" style="left:989.50px;top:434.34px;font-size:8.3px;color:#fff;transform:scaleX(0.8700);">0.96425</span>
<span class="t" id="t36" style="left:4.40px;top:445.58px;font-size:8px;color:#fff;transform:scaleX(0.8968);">12 Feb 2026</span>
<span class="t" id="t37" style="left:55.17px;top:445.58px;font-size:8px;color:#fff;transform:scaleX(0.9097);">12 Feb 17:15</span>
<span class="t" id="t38" style="left:106.10px;top:445.58px;font-size:8px;color:#fff;transform:scaleX(0.9097);">12 Feb 17:35</span>
<span class="t" id="t39" style="left:157.04px;top:445.58px;font-size:8px;color:#fff;transform:scaleX(0.9097);">12 Feb 17:55</span>
<span class="t" id="t40" style="left:207.97px;top:445.58px;font-size:8px;color:#fff;transform:scaleX(0.9097);">12 Feb 18:15</span>
<span class="t" id="t41" style="left:258.91px;top:445.58px;font-size:8px;color:#fff;transform:scaleX(0.9097);">12 Feb 18:35</span>
<span class="t" id="t42" style="left:309.85px;top:445.58px;font-size:8px;color:#fff;transform:scaleX(0.9097);">12 Feb 18:55</span>
<span class="t" id="t43" style="left:360.78px;top:445.58px;font-size:8px;color:#fff;transform:scaleX(0.9097);">12 Feb 19:15</span>
<span class="t" id="t44" style="left:411.72px;top:445.58px;font-size:8px;color:#fff;transform:scaleX(0.9097);">12 Feb 19:35</span>
<span class="t" id="t45" style="left:462.65px;top:445.58px;font-size:8px;color:#fff;transform:scaleX(0.9097);">12 Feb 19:55</span>
<span class="t" id="t46" style="left:513.59px;top:445.58px;font-size:8px;color:#fff;transform:scaleX(0.9097);">12 Feb 20:15</span>
<span class="t" id="t47" style="left:564.53px;top:445.58px;font-size:8px;color:#fff;transform:scaleX(0.9097);">12 Feb 20:35</span>
<span class="t" id="t48" style="left:615.46px;top:445.58px;font-size:8px;color:#fff;transform:scaleX(0.9097);">12 Feb 20:55</span>
<span class="t" id="t49" style="left:666.40px;top:445.58px;font-size:8px;color:#fff;transform:scaleX(0.9097);">12 Feb 21:15</span>
<span class="t" id="t50" style="left:717.33px;top:445.58px;font-size:8px;color:#fff;transform:scaleX(0.9097);">12 Feb 21:35</span>
<span class="t" id="t51" style="left:768.27px;top:445.58px;font-size:8px;color:#fff;transform:scaleX(0.9097);">12 Feb 21:55</span>
<span class="t" id="t52" style="left:819.21px;top:445.58px;font-size:8px;color:#fff;transform:scaleX(0.9097);">12 Feb 22:15</span>
<span class="t" id="t53" style="left:870.14px;top:445.58px;font-size:8px;color:#fff;transform:scaleX(0.9097);">12 Feb 22:35</span>
<span class="t" id="t54" style="left:921.08px;top:445.58px;font-size:8px;color:#fff;transform:scaleX(0.9097);">12 Feb 22:55</span>
<span class="t" id="t55" style="left:18.80px;top:468.19px;font-size:9.2px;color:#111;transform:scaleX(1.0068);">注文番号</span>
<span class="t" id="t56" style="left:66.00px;top:469.32px;font-size:7.5px;color:#999;transform:scaleX(1.4328);">/</span>
<span class="t" id="t57" style="left:226.80px;top:468.19px;font-size:9.2px;color:#111;transform:scaleX(1.0286);">時間</span>
<span class="t" id="t58" style="left:276.60px;top:468.19px;font-size:9.2px;color:#111;transform:scaleX(1.0095);">取引種別</span>
<span class="t" id="t59" style="left:349.00px;top:468.19px;font-size:9.2px;color:#111;transform:scaleX(0.9905);">数量</span>
<span class="t" id="t60" style="left:402.40px;top:468.19px;font-size:9.2px;color:#111;transform:scaleX(0.9224);">通貨ペア</span>
<span class="t" id="t61" style="left:494.40px;top:468.19px;font-size:9.2px;color:#111;transform:scaleX(0.9578);">価格</span>
<span class="t" id="t62" style="left:522.00px;top:468.19px;font-size:9.2px;color:#111;transform:scaleX(1.0146);">決済逆指値(S/...</span>
<span class="t" id="t63" style="left:606.60px;top:468.19px;font-size:9.2px;color:#111;transform:scaleX(1.0162);">決済指値(T/P)</span>
<span class="t" id="t64" style="left:723.20px;top:468.19px;font-size:9.2px;color:#111;transform:scaleX(0.9361);">価格</span>
<span class="t" id="t65" style="left:790.20px;top:468.19px;font-size:9.2px;color:#111;transform:scaleX(1.0014);">手数料</span>
<span class="t" id="t66" style="left:866.60px;top:468.19px;font-size:9.2px;color:#111;transform:scaleX(0.7510);">スワップ</span>
<span class="t" id="t67" style="left:997.10px;top:468.19px;font-size:9.2px;color:#111;transform:scaleX(0.9741);">損益</span>
<span class="t" id="t68" style="left:168.70px;top:485.79px;font-size:9px;color:#111;transform:scaleX(0.9595);">2026.02.11 03:45:00</span>
<span class="t" id="t69" style="left:302.80px;top:485.79px;font-size:9px;color:#111;transform:scaleX(0.8805);">sell</span>
<span class="t" id="t70" style="left:352.30px;top:485.79px;font-size:9px;color:#111;transform:scaleX(0.9640);">0.04</span>
<span class="t" id="t71" style="left:406.40px;top:485.79px;font-size:9px;color:#111;transform:scaleX(1.0362);">audcad</span>
<span class="t" id="t72" style="left:483.40px;top:485.79px;font-size:9px;color:#111;transform:scaleX(0.9279);">0.96053</span>
<span class="t" id="t73" style="left:559.80px;top:485.79px;font-size:9px;color:#111;transform:scaleX(0.9279);">0.00000</span>
<span class="t" id="t74" style="left:636.20px;top:485.79px;font-size:9px;color:#111;transform:scaleX(0.9463);">0.00000</span>
<span class="t" id="t75" style="left:712.20px;top:485.79px;font-size:9px;color:#111;transform:scaleX(0.9494);">0.96472</span>
<span class="t" id="t76" style="left:805.80px;top:485.79px;font-size:9px;color:#111;transform:scaleX(1.0526);">-76</span>
<span class="t" id="t77" style="left:882.50px;top:485.79px;font-size:9px;color:#111;transform:scaleX(1.0218);">-95</span>
<span class="t" id="t78" style="left:975.50px;top:485.79px;font-size:9px;color:#111;transform:scaleX(0.9753);">-1 881</span>
<span class="t" id="t79" style="left:1008.60px;top:485.50px;font-size:10px;color:#999;font-weight:bold;transform:scaleX(1.0610);">×</span>
<span class="t" id="t80" style="left:168.70px;top:501.69px;font-size:9px;color:#111;transform:scaleX(0.9595);">2026.02.11 16:05:00</span>
<span class="t" id="t81" style="left:302.80px;top:501.69px;font-size:9px;color:#111;transform:scaleX(0.8805);">sell</span>
<span class="t" id="t82" style="left:352.30px;top:501.69px;font-size:9px;color:#111;transform:scaleX(0.9640);">0.08</span>
<span class="t" id="t83" style="left:406.40px;top:501.69px;font-size:9px;color:#111;transform:scaleX(1.0362);">audcad</span>
<span class="t" id="t84" style="left:483.40px;top:501.69px;font-size:9px;color:#111;transform:scaleX(0.9279);">0.96737</span>
<span class="t" id="t85" style="left:559.80px;top:501.69px;font-size:9px;color:#111;transform:scaleX(0.9279);">0.00000</span>
<span class="t" id="t86" style="left:636.20px;top:501.69px;font-size:9px;color:#111;transform:scaleX(0.9463);">0.00000</span>
<span class="t" id="t87" style="left:712.20px;top:501.69px;font-size:9px;color:#111;transform:scaleX(0.9494);">0.96472</span>
<span class="t" id="t88" style="left:801.20px;top:501.69px;font-size:9px;color:#111;transform:scaleX(1.0158);">-152</span>
<span class="t" id="t89" style="left:877.60px;top:501.69px;font-size:9px;color:#111;transform:scaleX(1.0102);">-189</span>
<span class="t" id="t90" style="left:979.50px;top:501.69px;font-size:9px;color:#111;transform:scaleX(0.9276);">2 380</span>
<span class="t" id="t91" style="left:1008.60px;top:501.40px;font-size:10px;color:#999;font-weight:bold;transform:scaleX(1.0610);">×</span>
<span class="t" id="t92" style="left:31.50px;top:516.99px;font-size:9px;color:#111;font-weight:500;transform:scaleX(1.0249);-webkit-text-stroke:0.3px;">残高: 306 450 JPY</span>
<span class="t" id="t93" style="left:113.90px;top:516.99px;font-size:9px;color:#111;font-weight:500;transform:scaleX(1.0539);-webkit-text-stroke:0.3px;">有効証拠金: 306 437</span>
<span class="t" id="t94" style="left:206.50px;top:516.99px;font-size:9px;color:#111;font-weight:500;transform:scaleX(1.0437);-webkit-text-stroke:0.3px;">必要証拠金: 2 628</span>
<span class="t" id="t95" style="left:288.20px;top:516.99px;font-size:9px;color:#111;font-weight:500;transform:scaleX(1.0503);-webkit-text-stroke:0.3px;">余剰証拠金: 303 809</span>
<span class="t" id="t96" style="left:381.50px;top:516.99px;font-size:9px;color:#111;font-weight:500;transform:scaleX(1.0224);-webkit-text-stroke:0.3px;">証拠金維持率: 11660.69%</span>
<span class="t" id="t97" style="left:987.80px;top:516.99px;font-size:9px;color:#111;font-weight:500;transform:scaleX(0.9681);-webkit-text-stroke:0.35px;">-13</span>
<span class="t" id="t98" style="left:24.00px;top:594.29px;font-size:9.2px;transform:scaleX(0.9524);">取引</span>
<span class="t" id="t99" style="left:58.00px;top:594.29px;font-size:9.2px;color:#666;transform:scaleX(1.0422);">運用比率</span>
<span class="t" id="t100" style="left:112.90px;top:594.29px;font-size:9.2px;color:#666;transform:scaleX(1.0095);">口座履歴</span>
<span class="t" id="t101" style="left:166.70px;top:594.29px;font-size:9.2px;color:#666;transform:scaleX(0.7301);">ニュース</span>
<span class="t" id="t102" style="left:209.20px;top:594.29px;font-size:9.2px;color:#666;transform:scaleX(0.8349);">アラーム設定</span>
<span class="t" id="t103" style="left:271.20px;top:594.29px;font-size:9.2px;color:#666;transform:scaleX(0.7682);">メールボックス</span>
<span class="t" id="t104" style="left:345.00px;top:594.29px;font-size:9.2px;color:#666;transform:scaleX(0.7184);">マーケット</span>
<span class="t" id="t105" style="left:407.40px;top:594.29px;font-size:9.2px;color:#666;transform:scaleX(0.8054);">シグナル</span>
<span class="t" id="t106" style="left:453.90px;top:594.29px;font-size:9.2px;color:#666;transform:scaleX(0.9850);">記事</span>
<span class="t" id="t107" style="left:488.40px;top:594.29px;font-size:9.2px;color:#666;transform:scaleX(0.7314);">ライブラリ</span>
<span class="t" id="t108" style="left:538.20px;top:594.29px;font-size:9.2px;color:#666;transform:scaleX(0.7437);">エキスパート</span>
<span class="t" id="t109" style="left:596.30px;top:594.29px;font-size:9.2px;color:#666;transform:scaleX(1.0204);">操作履歴</span>
<span class="t" id="t110" style="left:103.90px;top:593.11px;font-size:11px;color:#666;transform:scaleX(0.4896);">|</span>
<span class="t" id="t111" style="left:158.00px;top:593.11px;font-size:11px;color:#666;transform:scaleX(0.4896);">|</span>
<span class="t" id="t112" style="left:200.80px;top:593.11px;font-size:11px;color:#666;transform:scaleX(0.4896);">|</span>
<span class="t" id="t113" style="left:262.60px;top:593.11px;font-size:11px;color:#666;transform:scaleX(0.4896);">|</span>
<span class="t" id="t114" style="left:336.90px;top:593.11px;font-size:11px;color:#666;transform:scaleX(0.4896);">|</span>
<span class="t" id="t115" style="left:399.10px;top:593.11px;font-size:11px;color:#666;transform:scaleX(0.4896);">|</span>
<span class="t" id="t116" style="left:444.90px;top:593.11px;font-size:11px;color:#666;transform:scaleX(0.4896);">|</span>
<span class="t" id="t117" style="left:480.30px;top:593.11px;font-size:11px;color:#666;transform:scaleX(0.4896);">|</span>
<span class="t" id="t118" style="left:529.50px;top:593.11px;font-size:11px;color:#666;transform:scaleX(0.4896);">|</span>
<span class="t" id="t119" style="left:587.60px;top:593.11px;font-size:11px;color:#666;transform:scaleX(0.4896);">|</span>
<span class="t" id="t120" style="left:641.30px;top:593.11px;font-size:11px;color:#666;transform:scaleX(0.4896);">|</span>
<span class="t" id="t121" style="left:321.40px;top:597.66px;font-size:6.4px;color:#e00000;font-weight:bold;transform:scaleX(1.1112);">21</span>
<span class="t" id="t122" style="left:380.50px;top:597.66px;font-size:6.4px;color:#e00000;font-weight:bold;transform:scaleX(1.0307);">105</span>
<span class="t" id="t123" style="left:2.70px;top:616.79px;font-size:9.2px;transform:scaleX(0.8510);">F1キーでヘルプが表示されます</span>
<span class="t" id="t124" style="left:462.80px;top:616.79px;font-size:9.2px;transform:scaleX(1.0266);">Default</span>
<span class="t" id="t125" style="left:931.30px;top:616.79px;font-size:9.2px;transform:scaleX(0.9823);">220967/85 kb</span>
<div class="b" style="left:987.1px;top:411.2px;width:31.6px;height:8.6px;background:#fff"></div>
<span class="t" id="t126" style="left:989.50px;top:411.63px;font-size:8.3px;transform:scaleX(0.8700);-webkit-text-stroke:0.3px;">0.96464</span>
<span class="t" id="t127" style="left:10.00px;top:7.25px;font-size:9.5px;color:#fff;font-weight:bold;transform:scaleX(0.9471);">G</span>
<span class="t" id="t128" style="left:175.10px;top:69.99px;font-size:9px;color:#555;font-weight:bold;transform:scaleX(0.9231);">A</span>
<span class="t" id="t129" style="left:136.20px;top:76.85px;font-size:5px;color:#444;font-weight:bold;transform:scaleX(0.8972);">E</span>
<span class="t" id="t130" style="left:158.30px;top:76.85px;font-size:5px;color:#444;font-weight:bold;transform:scaleX(0.8816);">F</span>
<span class="t" id="t131" style="left:1009.70px;top:45.74px;font-size:9.5px;color:#fff;font-weight:bold;transform:scaleX(0.6796);">1</span>
<span class="t" id="t132" style="left:2.90px;top:606.00px;font-size:9px;color:#333;transform-origin:0 0;transform:rotate(-90deg) scaleX(0.7953);">ターミナル</span>
</div>
</body></html>
